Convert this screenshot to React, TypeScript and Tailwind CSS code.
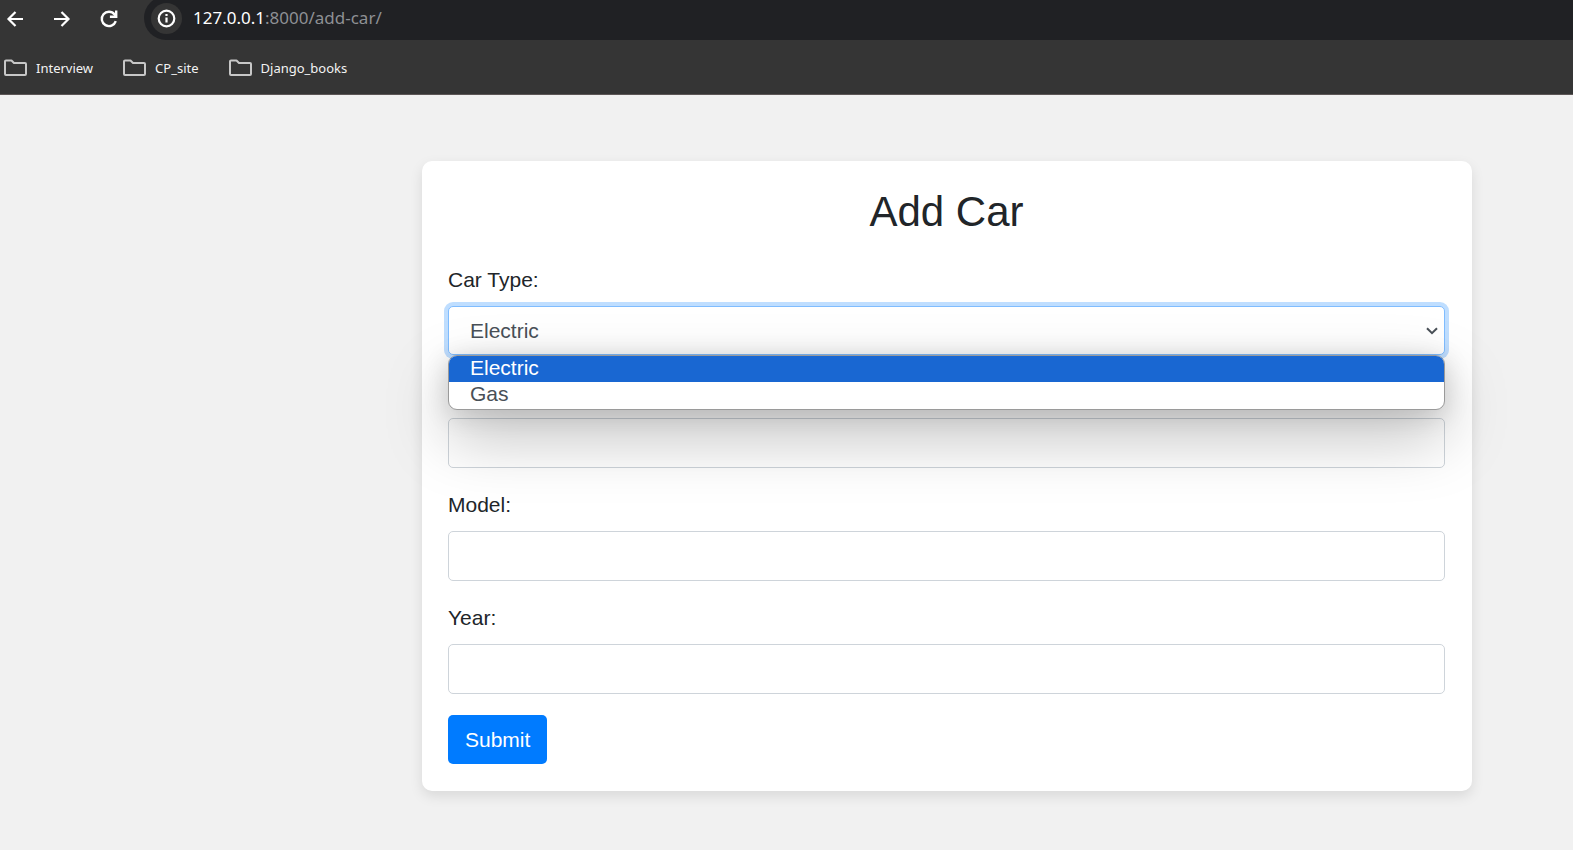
import React, { useState } from 'react';

const bookmarks = ['Interview', 'CP_site', 'Django_books'];
const carTypes = ['Electric', 'Gas'];

function FolderIcon() {
  return (
    <svg className="h-[18px] w-[23px] shrink-0" viewBox="0 0 23 18" fill="none" stroke="#c7c7c7" strokeWidth="2" strokeLinejoin="round" aria-hidden="true">
      <path d="M2 1.500h5.500l2.500 2.500h11a1 1 0 0 1 1 1v10a1 1 0 0 1-1 1H2a1 1 0 0 1-1-1v-12.500a1 1 0 0 1 1-1z" />
    </svg>
  );
}

function BrowserBar() {
  return (
    <header className="overflow-hidden border-b border-[#5c5656] bg-[#353535] font-['Noto_Sans','Open_Sans',sans-serif]">
      <div className="flex h-10 items-center">
        <nav className="flex w-36 shrink-0 items-center gap-[27px] pb-0.5 pl-[5px] text-white" aria-label="History">
          <button type="button" aria-label="Back" className="h-5 w-5">
            <svg className="h-5 w-5" viewBox="0 0 20 20" fill="none" stroke="currentColor" strokeWidth="2.2">
              <path d="M18 10H3.500M10.500 3l-7 7 7 7" />
            </svg>
          </button>
          <button type="button" aria-label="Forward" className="h-5 w-5">
            <svg className="h-5 w-5" viewBox="0 0 20 20" fill="none" stroke="currentColor" strokeWidth="2.2">
              <path d="M2 10h14.500M9.500 3l7 7-7 7" />
            </svg>
          </button>
          <button type="button" aria-label="Reload" className="h-5 w-5">
            <svg className="h-5 w-5" viewBox="0 0 20 20" fill="none" stroke="currentColor" strokeWidth="2.4">
              <path d="M16.800 12.200A7.200 7.200 0 1 1 15.600 5.400L17 7.200" />
              <path d="M17.200 1.500v6.300h-6.300" />
            </svg>
          </button>
        </nav>
        <div className="-mt-1 flex h-11 flex-1 items-center gap-[11px] rounded-l-full bg-[#202124] pl-[7px]">
          <button type="button" aria-label="View site information" className="flex h-[31px] w-[31px] items-center justify-center rounded-full bg-[#353535] text-white">
            <svg className="h-[19px] w-[19px]" viewBox="0 0 19 19" fill="none" stroke="currentColor" strokeWidth="2.2">
              <circle cx="9.500" cy="9.500" r="7.800" />
              <path d="M9.500 8.500v5M9.500 5v2" />
            </svg>
          </button>
          <span className="text-[17px] leading-6 text-white">
            127.0.0.1<span className="text-[#8e9094]">:8000/add-car/</span>
          </span>
        </div>
      </div>
      <nav className="flex h-[54px] items-center gap-[30px] pt-0.5 pl-1" aria-label="Bookmarks">
        {bookmarks.map((name) => (
          <a key={name} href="#" className="flex items-center gap-[9px] text-[13px] leading-5 text-[#f3f3f3]">
            <FolderIcon />
            {name}
          </a>
        ))}
      </nav>
    </header>
  );
}

const inputClass =
  'block h-[50px] w-full rounded-[5px] border border-[#ced4da] bg-white px-4 text-[#495057] outline-none';

function TextField({ id, label }: { id: string; label: string }) {
  return (
    <div className="mb-[21px]">
      <label htmlFor={id} className="mb-[10px] block leading-8">{label}</label>
      <input id={id} type="text" className={inputClass} />
    </div>
  );
}

export default function App() {
  const [type, setType] = useState('Electric');
  return (
    <div className="min-h-screen bg-[#f1f1f1] font-['Liberation_Sans',Arial,sans-serif] text-[21px] text-[#212529]">
      <BrowserBar />
      <main className="pt-[66px] pr-[101px] pb-[58px] pl-[422px]">
        <form onSubmit={(e) => e.preventDefault()} className="rounded-[10px] bg-white pt-[26px] pr-[27px] pb-[27px] pl-[26px] shadow-[0_5px_13px_rgba(0,0,0,0.1)]">
          <h1 className="mb-[27px] text-center text-[42px] leading-[50px]">Add Car</h1>
          <div className="relative mb-[21px]">
            <label htmlFor="car-type" className="mb-[10px] block leading-8">Car Type:</label>
            <div className="relative">
              <select
                id="car-type"
                value={type}
                onChange={(e) => setType(e.target.value)}
                className="block h-[49px] w-full appearance-none rounded-[5px] border border-[#80bdff] bg-white px-[21px] text-[#495057] shadow-[0_0_0_4px_#bfdeff] outline-none"
              >
                {carTypes.map((t) => (
                  <option key={t}>{t}</option>
                ))}
              </select>
              <svg className="pointer-events-none absolute top-[21px] right-[7px] h-2 w-3" viewBox="0 0 12 8" fill="none" stroke="#495057" strokeWidth="2" aria-hidden="true">
                <path d="M1 1.200 6 6.200l5-5" />
              </svg>
            </div>
            <ul role="listbox" aria-label="Car type options" className="absolute inset-x-0 top-full z-10 overflow-hidden rounded-[9px] border border-[#9a9a9a] bg-white pb-px leading-6 text-[#495057] shadow-[0_26px_64px_rgba(0,0,0,0.26),0_4px_26px_rgba(0,0,0,0.16)]">
              {carTypes.map((t) => (
                <li
                  key={t}
                  role="option"
                  aria-selected={t === type}
                  onClick={() => setType(t)}
                  className={t === type ? 'bg-[#1967d2] px-[21px] pb-0.5 text-white' : 'px-[21px] pb-0.5'}
                >
                  {t}
                </li>
              ))}
            </ul>
          </div>
          <div className="mb-[21px] pt-[42px]">
            <input id="make" type="text" aria-label="Make" className={inputClass} />
          </div>
          <TextField id="model" label="Model:" />
          <TextField id="year" label="Year:" />
          <button type="submit" className="block h-[49px] rounded-[5px] bg-[#007bff] px-[17px] text-white">Submit</button>
        </form>
      </main>
    </div>
  );
}
